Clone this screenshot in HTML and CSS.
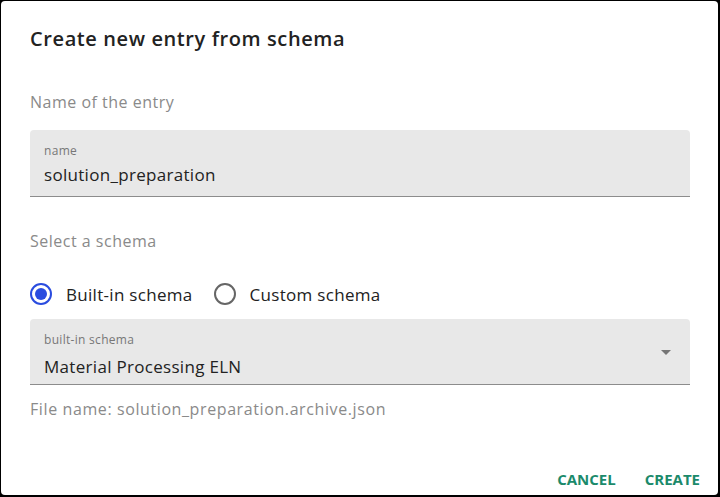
FILE: index.html
```html
<!DOCTYPE html>
<html>
<head>
<meta charset="utf-8">
<link rel="stylesheet" href="styles.css">
</head>
<body>
<div class="dialog">
  <h2 class="title">Create new entry from schema</h2>
  <div class="content">
    <p class="section-label">Name of the entry</p>
    <div class="field">
      <div class="field-label">name</div>
      <div class="field-value">solution_preparation</div>
    </div>
    <p class="section-label schema-label">Select a schema</p>
    <div class="radios">
      <label class="radio checked"><span class="dot"></span><span>Built-in schema</span></label>
      <label class="radio"><span class="dot"></span><span>Custom schema</span></label>
    </div>
    <div class="field select">
      <div class="field-label">built-in schema</div>
      <div class="field-value">Material Processing ELN</div>
      <svg class="arrow" width="24" height="24" viewBox="0 0 24 24"><path d="M7 10l5 5 5-5z" fill="#757575"/></svg>
    </div>
    <p class="helper">File name: solution_preparation.archive.json</p>
  </div>
  <div class="actions">
    <button class="btn">CANCEL</button>
    <button class="btn">CREATE</button>
  </div>
</div>
</body>
</html>
```
FILE: styles.css
```css
* { box-sizing: border-box; }
html, body { margin: 0; padding: 0; }
body {
  background: #000;
  width: 720px;
  height: 497px;
  padding: 1px 2px 2px 1px;
  font-family: "Open Sans", "Noto Sans", sans-serif;
}
.dialog {
  background: #fff;
  width: 717px;
  height: 494px;
  border-radius: 4px;
  display: flex;
  flex-direction: column;
}
.title {
  margin: 0;
  padding: 24px 29px 0;
  font-size: 20px;
  font-weight: 600;
  letter-spacing: 0.6px;
  color: #222;
  line-height: 28px;
}
.content {
  padding: 0 28px 0 29px;
  flex: 1;
}
.section-label {
  margin: 38px 0 0;
  font-size: 16px;
  line-height: 22px;
  letter-spacing: 0.5px;
  color: #8a8a8a;
}
.field {
  position: relative;
  margin-top: 17px;
  height: 67px;
  background: #e8e8e8;
  border-radius: 4px 4px 0 0;
  border-bottom: 1px solid #8c8c8c;
  padding: 13px 14px 0;
}
.field-label {
  font-size: 12px;
  line-height: 16px;
  letter-spacing: 0.3px;
  color: #777;
}
.field-value {
  margin-top: 5px;
  font-size: 17px;
  line-height: 22px;
  letter-spacing: 0.3px;
  color: #222;
}
.schema-label { margin-top: 33px; }
.radios {
  display: flex;
  gap: 21px;
  margin-top: 24px;
  height: 36px;
  align-items: center;
}
.radio {
  display: flex;
  align-items: center;
  gap: 14px;
  font-size: 17px;
  letter-spacing: 0.3px;
  color: #222;
}
.dot {
  width: 22px;
  height: 22px;
  border-radius: 50%;
  border: 2px solid #666;
  position: relative;
}
.radio.checked .dot { border-color: #2a4cdf; }
.radio.checked .dot::after {
  content: "";
  position: absolute;
  left: 3px; top: 3px;
  width: 12px; height: 12px;
  border-radius: 50%;
  background: #2a4cdf;
}
.field.select { margin-top: 7px; height: 66px; }
.field.select .field-value { margin-top: 8px; }
.arrow { position: absolute; right: 12px; top: 21px; }
.helper {
  margin: 13px 0 0;
  font-size: 16px;
  line-height: 22px;
  letter-spacing: 0.6px;
  color: #8a8a8a;
}
.actions {
  display: flex;
  justify-content: flex-end;
  gap: 5px;
  padding: 0 6px 0;
}
.btn {
  background: none;
  border: none;
  font-family: inherit;
  font-size: 15px;
  font-weight: 700;
  color: #1b8a6b;
  padding: 6px 12px;
  line-height: 20px;
}
```
